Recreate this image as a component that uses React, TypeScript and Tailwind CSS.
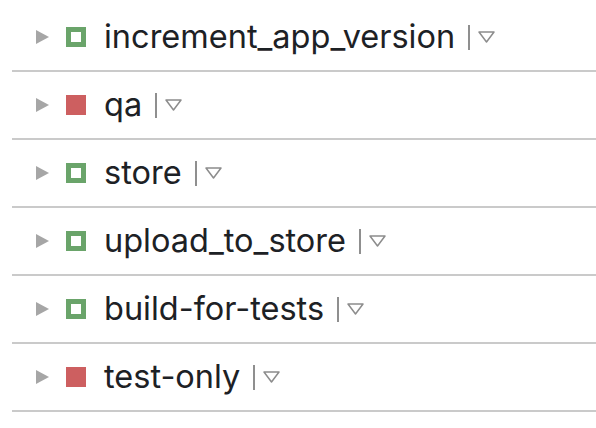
import React from "react";

type Stage = { name: string; ok: boolean };

const stages: Stage[] = [
  { name: "increment_app_version", ok: true },
  { name: "qa", ok: false },
  { name: "store", ok: true },
  { name: "upload_to_store", ok: true },
  { name: "build-for-tests", ok: true },
  { name: "test-only", ok: false },
];

const Row: React.FC<{ stage: Stage }> = ({ stage }) => {
  return (
    <div className="flex items-center h-[68px] ml-[12px] pl-[24px] border-b-2 border-[#cacaca]">
      <svg width="13" height="14" viewBox="0 0 13 14" className="shrink-0">
        <polygon points="0,0 13,7 0,14" fill="#a6a6a6" />
      </svg>
      {stage.ok ? (
        <div className="ml-[17px] w-[20px] h-[20px] border-[5px] border-[#6aa46a] shrink-0" />
      ) : (
        <div className="ml-[17px] w-[20px] h-[20px] bg-[#cd5f60] shrink-0" />
      )}
      <span className="ml-[18px] text-[32.5px] leading-none text-[#1d2125]">
        {stage.name}
      </span>
      <div className="ml-[13px] w-[2px] h-[25px] bg-[#8f8f8f]" />
      <svg width="17" height="12" viewBox="0 0 17 12" className="ml-[8px]">
        <polygon points="1,1 16,1 8.5,11" fill="none" stroke="#8c8c8c" strokeWidth="1.5" strokeLinejoin="round" />
      </svg>
    </div>
  );
};

export default function App() {
  return (
    <div className="w-[596px] h-[428px] bg-white pt-[4px]" style={{ fontFamily: "Inter, 'Noto Sans', sans-serif" }}>
      {stages.map((s) => (
        <Row key={s.name} stage={s} />
      ))}
    </div>
  );
}
